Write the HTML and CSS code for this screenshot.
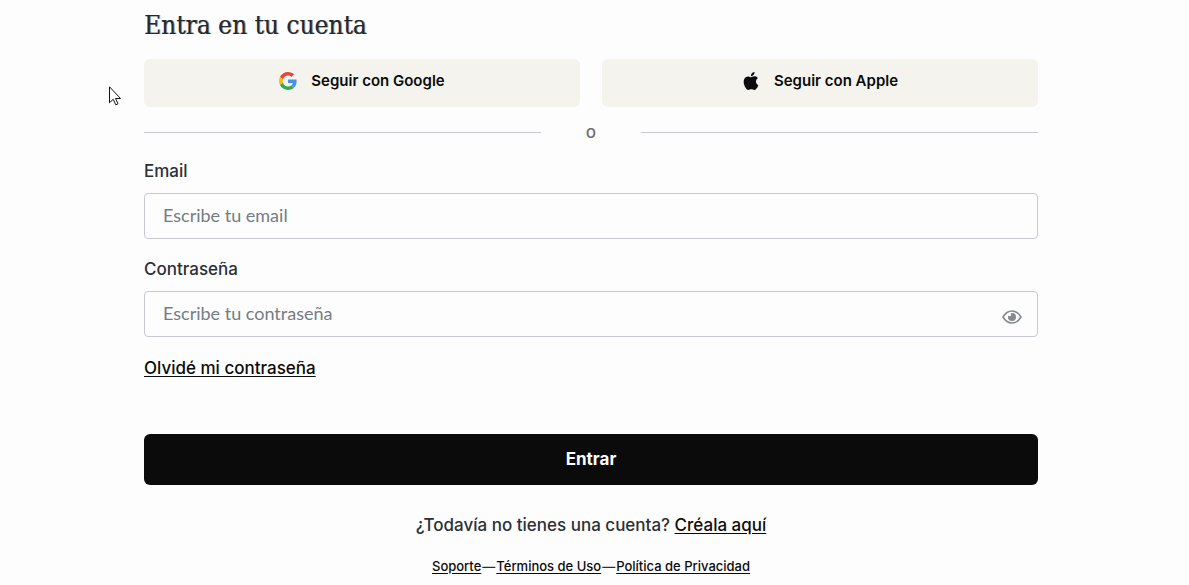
FILE: index.html
```html
<!DOCTYPE html>
<html lang="es">
<head>
<meta charset="utf-8">
<meta name="viewport" content="width=device-width, initial-scale=1">
<title>Entra en tu cuenta</title>
<link rel="stylesheet" href="styles.css">
</head>
<body>
<main class="login">
  <h1 class="title">Entra en tu cuenta</h1>
  <div class="providers">
    <button class="provider" type="button">
      <svg class="provider-icon" viewBox="0 0 48 48" aria-hidden="true">
        <path fill="#ea4335" d="M24 9.500c3.540 0 6.710 1.220 9.210 3.600l6.850-6.850C35.900 2.380 30.470 0 24 0 14.620 0 6.510 5.380 2.560 13.220l7.980 6.190C12.430 13.720 17.740 9.500 24 9.500z"/>
        <path fill="#4a90e8" d="M46.980 24.550c0-1.570-.15-3.090-.38-4.550H24v9.020h12.940c-.58 2.960-2.260 5.480-4.780 7.180l7.730 6c4.510-4.180 7.090-10.360 7.090-17.650z"/>
        <path fill="#fbbc05" d="M10.530 28.590c-.48-1.450-.76-2.990-.76-4.590s.27-3.140.76-4.590l-7.980-6.190C.92 16.460 0 20.120 0 24s.92 7.540 2.560 10.780l7.970-6.190z"/>
        <path fill="#34a853" d="M24 48c6.480 0 11.930-2.130 15.890-5.810l-7.730-6c-2.150 1.450-4.920 2.300-8.160 2.300-6.260 0-11.570-4.220-13.470-9.910l-7.980 6.190C6.510 42.620 14.620 48 24 48z"/>
      </svg>
      <span>Seguir con Google</span>
    </button>
    <button class="provider" type="button">
      <svg class="provider-icon" viewBox="0 0 24 24" aria-hidden="true">
        <path fill="#0b0b0b" d="M12.150 6.900c-.95 0-2.410-1.080-3.960-1.040-2.040.03-3.910 1.180-4.960 3.010-2.120 3.680-.55 9.100 1.520 12.090 1.010 1.450 2.210 3.090 3.790 3.040 1.520-.07 2.090-.99 3.940-.99 1.830 0 2.350.99 3.960.95 1.640-.03 2.680-1.480 3.680-2.950 1.160-1.690 1.640-3.320 1.660-3.410-.04-.01-3.180-1.220-3.220-4.860-.03-3.040 2.480-4.490 2.600-4.560-1.430-2.090-3.620-2.320-4.390-2.380-2-.16-3.680 1.090-4.620 1.090zM15.530 3.830c.84-1.010 1.400-2.430 1.250-3.830-1.210.05-2.660.8-3.530 1.820-.78.900-1.450 2.340-1.270 3.710 1.340.1 2.710-.69 3.550-1.700"/>
      </svg>
      <span>Seguir con Apple</span>
    </button>
  </div>
  <div class="divider"><span class="divider-text">o</span></div>
  <form class="form">
    <label class="label" for="email">Email</label>
    <input class="input" id="email" type="email" placeholder="Escribe tu email">
    <label class="label" for="password">Contraseña</label>
    <div class="password">
      <input class="input" id="password" type="password" placeholder="Escribe tu contraseña">
      <button class="reveal" type="button" aria-label="Mostrar contraseña">
        <svg class="eye" viewBox="0 0 20 14" aria-hidden="true">
          <path fill="none" stroke="#85888f" stroke-width="1.600" d="M1 7C3.300 3 6.300 1 10 1s6.700 2 9 6c-2.300 4-5.300 6-9 6S3.300 11 1 7z"/>
          <path fill="#85888f" d="M10 3a4 4 0 1 1-4 4c0-.5.100-1 .3-1.400.5.700 1.500.9 2.200.4.800-.5.900-1.500.4-2.200-.1-.2-.1-.4 0-.6.300-.1.700-.2 1.100-.2z"/>
        </svg>
      </button>
    </div>
    <a class="link forgot" href="#">Olvidé mi contraseña</a>
    <button class="submit" type="submit">Entrar</button>
  </form>
  <p class="signup">¿Todavía no tienes una cuenta? <a class="link" href="#">Créala aquí</a></p>
  <footer class="legal">
    <a class="link" href="#">Soporte</a>
    <span>—</span>
    <a class="link" href="#">Términos de Uso</a>
    <span>—</span>
    <a class="link" href="#">Política de Privacidad</a>
  </footer>
</main>
<svg class="cursor" viewBox="0 0 12 20" aria-hidden="true">
  <path fill="#fff" stroke="#11111c" d="M.5.800v16l3.700-3.500 2.600 5.500 2.200-1-2.500-5.300h5z"/>
</svg>
</body>
</html>
```
FILE: styles.css
```css
* {
  box-sizing: border-box;
}

body {
  margin: 0;
  background: #fdfdfd;
  color: #2b3036;
  font-family: Inter, "Liberation Sans", sans-serif;
  font-size: 17px;
  font-weight: 500;
  line-height: 24px;
}

button,
input {
  font: inherit;
}

.login {
  display: flex;
  flex-direction: column;
  padding: 9px 151px 8px 144px;
}

.title {
  margin: 0 0 18px;
  color: #24292d;
  font-family: "DejaVu Serif Condensed", "DejaVu Serif", serif;
  font-size: 26px;
  font-weight: 400;
  line-height: 32px;
  text-shadow: 1px 0 rgba(36, 41, 45, 0.5);
}

.providers {
  display: grid;
  grid-template-columns: 1fr 1fr;
  gap: 22px;
}

.provider {
  display: flex;
  align-items: center;
  justify-content: center;
  gap: 14px;
  height: 48px;
  padding: 0 0 4px;
  border: 0;
  border-radius: 6px;
  background: #f4f3ee;
  color: #0b0b0b;
  font-size: 15px;
  font-weight: 600;
}

.provider-icon {
  width: 18px;
  height: 18px;
}

.divider {
  display: flex;
  align-items: center;
  height: 24px;
  margin: 13px 0 15px;
  color: #6b7078;
}

.divider::before,
.divider::after {
  content: "";
  flex: 1;
  height: 1px;
  background: #c9cacf;
}

.divider-text {
  width: 100px;
  text-align: center;
}

.form {
  display: flex;
  flex-direction: column;
}

.label {
  margin-bottom: 10px;
}

.input {
  width: 100%;
  height: 46px;
  margin-bottom: 18px;
  padding: 0 18px 2px;
  border: 1px solid #c9cacf;
  border-radius: 4px;
  background: #fdfdfd;
  color: #2b3036;
  font-family: Lato, sans-serif;
  font-size: 18px;
  font-weight: 400;
}

.input::placeholder {
  color: #747c84;
  opacity: 1;
}

.password {
  position: relative;
  display: flex;
}

.reveal {
  position: absolute;
  top: 19px;
  right: 16px;
  display: flex;
  padding: 0;
  border: 0;
  background: none;
}

.eye {
  width: 20px;
  height: 14px;
}

.link {
  color: #0b0b0b;
  text-decoration: underline;
  text-underline-offset: 2px;
}

.forgot {
  align-self: flex-start;
  margin-top: 1px;
}

.submit {
  height: 51px;
  margin-top: 54px;
  padding: 0 0 2px;
  border: 0;
  border-radius: 6px;
  background: #0b0b0b;
  color: #fdfdfd;
  font-weight: 700;
}

.signup {
  margin: 28px 0 19px;
  text-align: center;
}

.legal {
  display: flex;
  justify-content: center;
  gap: 1px;
  font-size: 13px;
  line-height: 20px;
}

.cursor {
  position: absolute;
  top: 86px;
  left: 109px;
  width: 12px;
  height: 20px;
}
```
